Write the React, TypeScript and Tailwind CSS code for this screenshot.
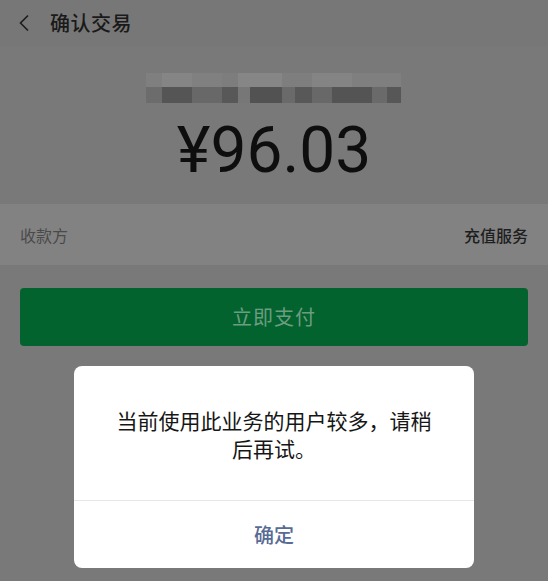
import React from "react";

// blurred merchant name: top row mostly light, bottom row darker mosaic
const mosaicTop = [
  "w-[16px] bg-[#7f7f7f]",
  "w-[30px] bg-[#858585]",
  "w-[30px] bg-[#808080]",
  "w-[16px] bg-[#7d7d7d]",
  "w-[44px] bg-[#868686]",
  "w-[30px] bg-[#7e7e7e]",
  "w-[40px] bg-[#848484]",
  "w-[49px] bg-[#7f7f7f]",
];

const mosaicBottom = [
  "w-[16px] bg-[#6c6c6c]",
  "w-[30px] bg-[#555555]",
  "w-[30px] bg-[#686868]",
  "w-[16px] bg-[#585858]",
  "w-[12px] bg-[#777777]",
  "w-[32px] bg-[#525252]",
  "w-[13px] bg-[#6a6a6a]",
  "w-[17px] bg-[#585858]",
  "w-[20px] bg-[#686868]",
  "w-[40px] bg-[#545454]",
  "w-[15px] bg-[#6a6a6a]",
  "w-[14px] bg-[#575757]",
];

const App: React.FC = () => {
  return (
    <div
      className="relative w-[548px] h-[581px] overflow-hidden bg-[#797979]"
      style={{ fontFamily: '"Noto Sans CJK SC", "Noto Sans", sans-serif' }}
    >
      {/* Header */}
      <div className="h-[46px] flex items-center bg-[#777777]">
        <svg
          className="ml-[17px] w-[14px] h-[18px]"
          viewBox="0 0 14 18"
          fill="none"
          stroke="#1c1c1c"
          strokeWidth="1.6"
        >
          <path d="M11 1.5 L3.5 9 L11 16.5" />
        </svg>
        <span className="ml-[19px] text-[20px] leading-none text-[#1a1a1a] font-medium tracking-[0.5px]">
          确认交易
        </span>
      </div>

      {/* Amount */}
      <div className="h-[158px] flex flex-col items-center">
        <div className="mt-[27px] mr-[2px] flex flex-col w-[255px] h-[30px]">
          <div className="flex h-[14px]">
            {mosaicTop.map((c, i) => (
              <div key={i} className={`h-full ${c}`} />
            ))}
          </div>
          <div className="flex h-[16px]">
            {mosaicBottom.map((c, i) => (
              <div key={i} className={`h-full ${c}`} />
            ))}
          </div>
        </div>
        <div
          className="mt-[16px] text-[64px] leading-[64px] text-[#0e0e0e]"
          style={{ fontFamily: '"Roboto", "Liberation Sans", sans-serif' }}
        >
          ¥96.03
        </div>
      </div>

      {/* Payee row */}
      <div className="h-[61px] bg-[#828282] flex items-center justify-between px-[20px]">
        <span className="text-[16px] text-[#4a4a4a]">收款方</span>
        <span className="text-[16px] text-[#1e1e1e] font-medium">充值服务</span>
      </div>

      {/* Pay button */}
      <div className="px-[20px] pt-[23px]">
        <div className="h-[58px] rounded-[4px] bg-[#02632f] flex items-center justify-center">
          <span className="text-[20px] text-[#6c9d80] tracking-[1px]">立即支付</span>
        </div>
      </div>

      {/* Dialog */}
      <div className="absolute left-[74px] top-[366px] w-[400px] h-[202px] bg-white rounded-[8px] flex flex-col">
        <div className="flex-1 flex items-center justify-center px-[36px] pt-[2px]">
          <p className="text-center text-[21px] leading-[28px] text-[#161616]">
            当前使用此业务的用户较多，请稍后再试。
          </p>
        </div>
        <div className="h-px bg-[#e6e6e6]" />
        <div className="h-[67px] flex items-center justify-center">
          <span className="text-[20px] font-medium text-[#576b95]">确定</span>
        </div>
      </div>
    </div>
  );
};

export default App;
